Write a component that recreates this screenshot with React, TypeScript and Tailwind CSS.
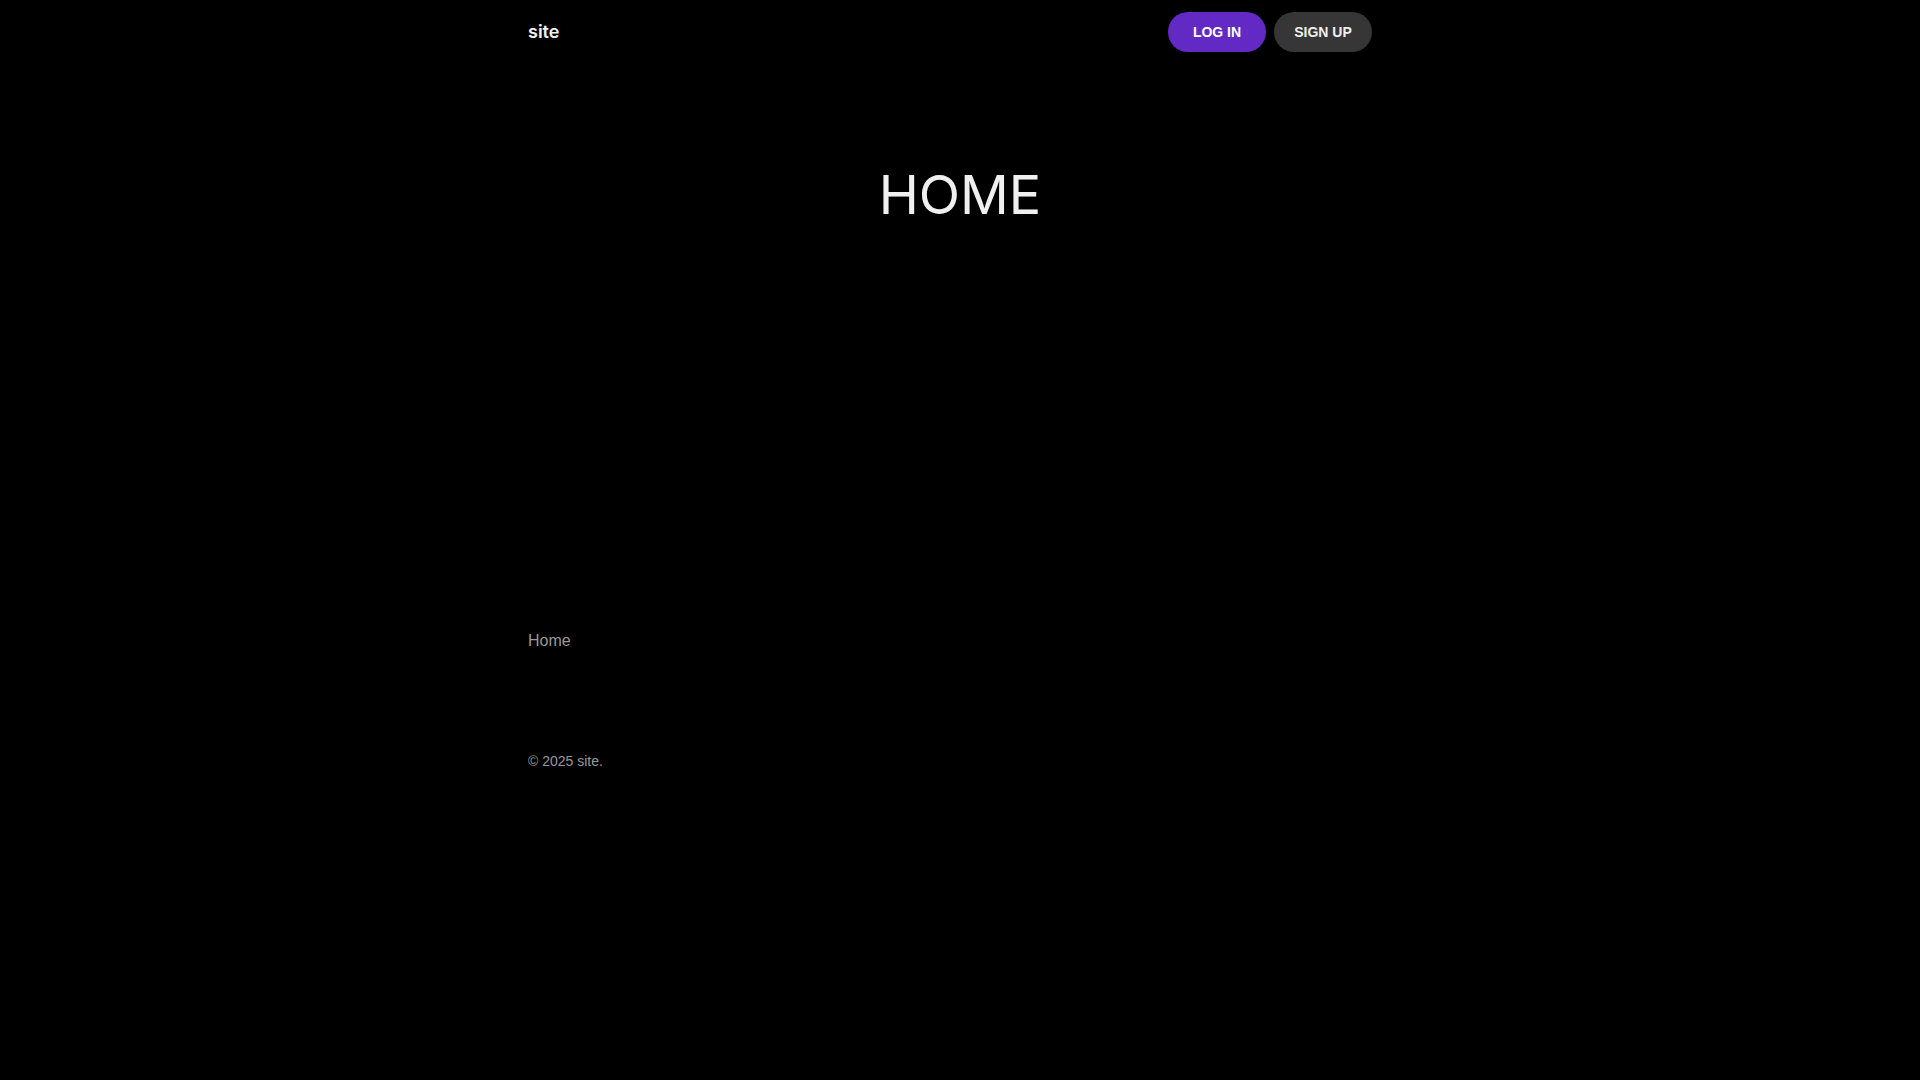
import React from "react";

export default function App() {
  return (
    <div className="min-h-screen w-full bg-black text-white">
      <div className="mx-auto w-[864px]">
        <header className="flex h-16 items-center justify-between pr-5">
          <a className="-mt-[1px] font-['Inter',sans-serif] text-[18px] font-semibold text-[#f0f0f0]">site</a>
          <div className="flex items-center gap-2">
            <button className="h-10 w-[98px] rounded-full bg-[#6229c4] font-['Liberation_Sans',Arial,sans-serif] text-[14px] font-bold text-white">
              LOG IN
            </button>
            <button className="h-10 w-[98px] rounded-full bg-[#363636] font-['Liberation_Sans',Arial,sans-serif] text-[14px] font-bold text-[#f0f0f0]">
              SIGN UP
            </button>
          </div>
        </header>
        <main className="pt-[99px]">
          <h1 className="text-center font-['Inter',sans-serif] text-[54px] font-normal leading-[1.2] text-[#f0f0f0]">HOME</h1>
        </main>
        <nav className="mt-[401px] font-['Liberation_Sans',Arial,sans-serif] text-[16px] text-[#999999]">
          <a>Home</a>
        </nav>
        <footer className="mt-[98px] font-['Liberation_Sans',Arial,sans-serif] text-[14px] text-[#999999]">
          © 2025 site.
        </footer>
      </div>
    </div>
  );
}
